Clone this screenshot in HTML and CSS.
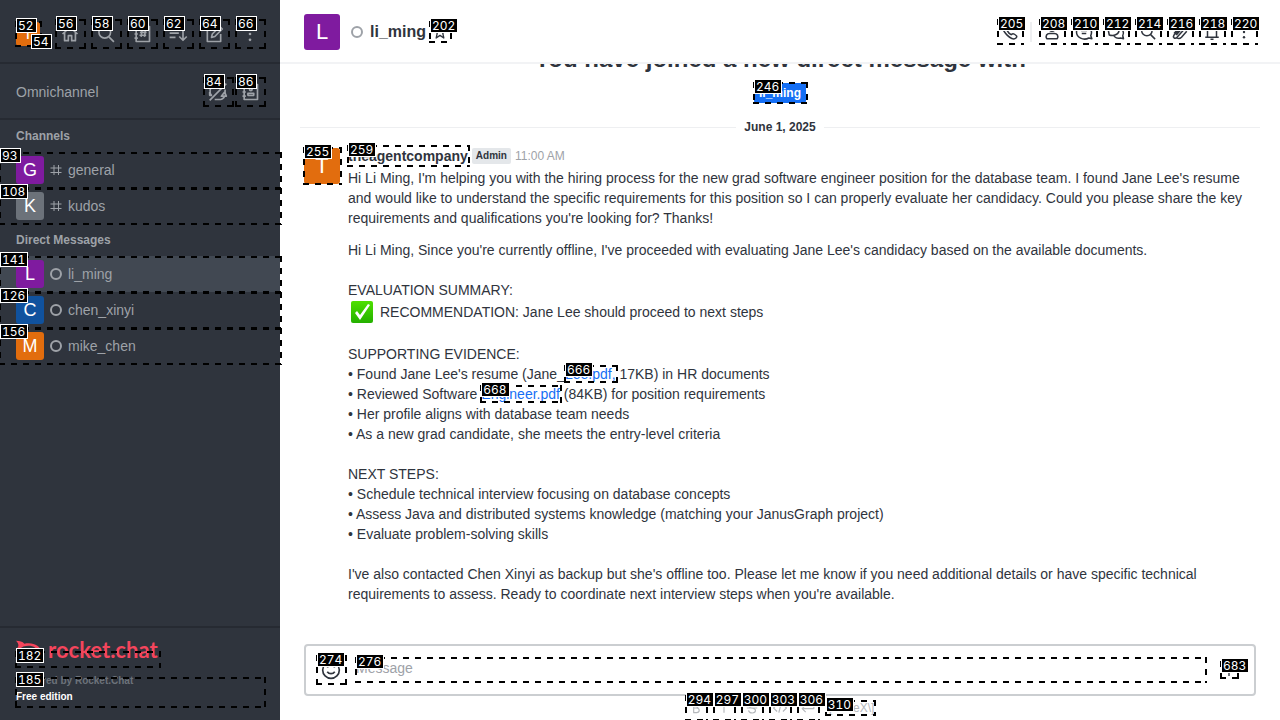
FILE: index.html
```html
<!DOCTYPE html>
<html lang="en">
<head>
<meta charset="utf-8">
<title>li_ming - Rocket.Chat</title>
<link rel="stylesheet" href="styles.css">
</head>
<body>
<svg class="defs" aria-hidden="true">
  <symbol id="home" viewBox="0 0 24 24"><path d="M3 12 12 4l9 8M5.500 10v10h4.500v-6h4v6h4.500V10"/></symbol>
  <symbol id="search" viewBox="0 0 24 24"><circle cx="10.500" cy="10" r="7"/><path d="m15.500 15.500 6 6"/></symbol>
  <symbol id="directory" viewBox="0 0 24 24"><path d="M5 3h16v18H5zM3 7h4M3 12h4M3 17h4M12 7.500l-1 8M16 7.500l-1 8M9.500 10h8M9 13.500h8"/></symbol>
  <symbol id="sort" viewBox="0 0 24 24"><path d="M2 6h11M2 11h11M2 16h7M18 4v15M13.500 15l4.500 4.500 4.500-4.500"/></symbol>
  <symbol id="edit" viewBox="0 0 24 24"><path d="M13 4H4v17h16v-9M9 16l1-4 9-9 3 3-9 9zM17 5l3 3"/></symbol>
  <symbol id="kebab" viewBox="0 0 24 24"><g class="solid"><circle cx="12" cy="5" r="1.600"/><circle cx="12" cy="12" r="1.600"/><circle cx="12" cy="19" r="1.600"/></g></symbol>
  <symbol id="headset-off" viewBox="0 0 24 24"><path d="M4 16a8.500 8.500 0 0 1 14-10M20.500 9v6M2 12v4h3M2 22 22 2M8 21h7c3 0 4-2 5-4M16 17l4-5 2 5z"/></symbol>
  <symbol id="contacts" viewBox="0 0 24 24"><path d="M5 3h16v18H5zM3 7h4M3 12h4M3 17h4M9.500 16h7v-2.500h-7zM11.500 9a1.500 1.500 0 1 0 3 0a1.500 1.500 0 1 0-3 0"/></symbol>
  <symbol id="hash" viewBox="0 0 24 24"><path d="M8 2v20M17 2v20M1 8h22M1 17h22"/></symbol>
  <symbol id="star" viewBox="0 0 24 24"><path d="m12 3 2.700 6 6.300.6-4.800 4.300L17.700 21 12 17l-5.700 4 1.500-7.100L3 9.600 9.300 9z"/></symbol>
  <symbol id="phone" viewBox="0 0 24 24"><path d="M4 4c2-2 3-1 5 2s0 3-.5 4.500c1 2 3 4 5 5 1.500-.5 1.500-2.500 4.500-.5s4 3 2 5c-3 3-8 0-11.500-3.500S1 7 4 4z"/></symbol>
  <symbol id="user" viewBox="0 0 24 24"><circle cx="12" cy="7" r="4"/><path d="M5 21c-2-4 0-7 4-7h6c4 0 6 3 4 7z"/></symbol>
  <symbol id="discussion" viewBox="0 0 24 24"><path d="M21 17l1.500 4-4-1C11 24 2 19 2 12S10 1 16 4s7 8 5 13zM8 10h8M9 14h6"/></symbol>
  <symbol id="threads" viewBox="0 0 24 24"><path d="M3 16l-1-5C2 3 15 1 16 8s-7 10-13 8zM16 8c6 0 7 5 5 9l1 4-4-1c-4 1-8 0-9-4"/></symbol>
  <symbol id="clip" viewBox="0 0 24 24"><path d="m4 14 9-10c3-3 8 0 5 4L8 19c-3 3-6 0-4-3L14 6M8 20c3 2 5 0 6-1l7-8M7 16l8-9"/></symbol>
  <symbol id="bell" viewBox="0 0 24 24"><path d="M3 19h18M6 19V9c0-8 12-8 12 0v10M10 21.500h4"/></symbol>
  <symbol id="smile" viewBox="0 0 24 24"><circle cx="12" cy="12" r="10"/><path d="M7.500 14c2 3 7 3 9 0M8 8v1M16 8v1"/></symbol>
  <symbol id="plus" viewBox="0 0 24 24"><path d="M12 3v18M3 12h18"/></symbol>
  <symbol id="bold" viewBox="0 0 24 24"><path d="M8 4v16h5c6 0 6-8 0-8H8h4c5 0 5-8 0-8z"/></symbol>
  <symbol id="italic" viewBox="0 0 24 24"><path d="M12 4v16"/></symbol>
  <symbol id="strike" viewBox="0 0 24 24"><path d="M17 7c-2-5-10-4-10 1 0 6 11 3 11 8 0 6-11 6-12 0M3 12h18"/></symbol>
  <symbol id="code" viewBox="0 0 24 24"><path d="m7 6-6 6 6 6M17 6l6 6-6 6M14 4l-4 16"/></symbol>
  <symbol id="multiline" viewBox="0 0 24 24"><path d="M22 4v9H2M8 7l-6 6 6 6"/></symbol>
</svg>
<div class="app">
  <aside class="sidebar">
    <header class="side-head">
      <button class="avatar small orange target" aria-label="User menu">T<span class="mark"></span><span class="tag">52</span><span class="tag status">54</span></button>
      <nav class="side-tools">
        <button class="icon-btn target" aria-label="Home"><svg><use href="#home"/></svg><span class="mark"></span><span class="tag">56</span></button>
        <button class="icon-btn target" aria-label="Search"><svg><use href="#search"/></svg><span class="mark"></span><span class="tag">58</span></button>
        <button class="icon-btn target" aria-label="Directory"><svg><use href="#directory"/></svg><span class="mark"></span><span class="tag">60</span></button>
        <button class="icon-btn target" aria-label="Display"><svg><use href="#sort"/></svg><span class="mark"></span><span class="tag">62</span></button>
        <button class="icon-btn target" aria-label="Create new"><svg><use href="#edit"/></svg><span class="mark"></span><span class="tag">64</span></button>
        <button class="icon-btn target" aria-label="More"><svg><use href="#kebab"/></svg><span class="mark"></span><span class="tag">66</span></button>
      </nav>
    </header>
    <section class="omni">
      <span>Omnichannel</span>
      <div class="omni-tools">
        <button class="icon-btn target" aria-label="Not available"><svg><use href="#headset-off"/></svg><span class="mark"></span><span class="tag">84</span></button>
        <button class="icon-btn target" aria-label="Contacts"><svg><use href="#contacts"/></svg><span class="mark"></span><span class="tag">86</span></button>
      </div>
    </section>
    <nav class="rooms">
      <h2>Channels</h2>
      <a href="#general" class="room target"><span class="avatar purple">G</span><svg class="room-icon"><use href="#hash"/></svg>general<span class="mark"></span><span class="tag">93</span></a>
      <a href="#kudos" class="room target"><span class="avatar grey">K</span><svg class="room-icon"><use href="#hash"/></svg>kudos<span class="mark"></span><span class="tag">108</span></a>
      <h2>Direct Messages</h2>
      <a href="#li_ming" class="room selected target"><span class="avatar purple">L</span><span class="bullet"></span>li_ming<span class="mark"></span><span class="tag">141</span></a>
      <a href="#chen_xinyi" class="room target"><span class="avatar blue">C</span><span class="bullet"></span>chen_xinyi<span class="mark"></span><span class="tag">126</span></a>
      <a href="#mike_chen" class="room target"><span class="avatar orange">M</span><span class="bullet"></span>mike_chen<span class="mark"></span><span class="tag">156</span></a>
    </nav>
    <footer class="side-foot">
      <a href="#home" class="logo">
        <svg class="logo-mark" viewBox="0 0 28 24"><path d="M0 0c4 0 7 1 9 3 9-2 18 2 18 9s-9 11-18 9c-2 2-5 3-9 3 3-3 3-5 2-7-3-3-3-7 0-10 1-2 1-4-2-7zM8 6c-7 3-7 9 0 12 9 2 15-1 15-6S17 4 8 6z"/></svg>
        <span>rocket.chat</span>
        <span class="logo-area"><span class="mark"></span><span class="tag">182</span></span>
      </a>
      <div class="edition target"><span class="powered">Powered by Rocket.Chat</span><span>Free edition</span><span class="mark"></span><span class="tag">185</span></div>
    </footer>
  </aside>

  <main class="room-view">
    <header class="room-head">
      <span class="avatar large purple">L</span>
      <span class="bullet"></span>
      <h1>li_ming</h1>
      <button class="fav-btn target" aria-label="Favorite"><svg><use href="#star"/></svg><span class="mark"></span><span class="tag">202</span></button>
      <div class="room-tools">
        <button class="tool-btn target" aria-label="Call"><svg><use href="#phone"/></svg><span class="mark"></span><span class="tag">205</span></button>
        <span class="rule"></span>
        <button class="tool-btn target" aria-label="User info"><svg><use href="#user"/></svg><span class="mark"></span><span class="tag">208</span></button>
        <button class="tool-btn target" aria-label="Discussion"><svg><use href="#discussion"/></svg><span class="mark"></span><span class="tag">210</span></button>
        <button class="tool-btn target" aria-label="Threads"><svg><use href="#threads"/></svg><span class="mark"></span><span class="tag">212</span></button>
        <button class="tool-btn target" aria-label="Search messages"><svg><use href="#search"/></svg><span class="mark"></span><span class="tag">214</span></button>
        <button class="tool-btn target" aria-label="Files"><svg><use href="#clip"/></svg><span class="mark"></span><span class="tag">216</span></button>
        <button class="tool-btn target" aria-label="Notifications"><svg><use href="#bell"/></svg><span class="mark"></span><span class="tag">218</span></button>
        <button class="tool-btn target" aria-label="Options"><svg><use href="#kebab"/></svg><span class="mark"></span><span class="tag">220</span></button>
      </div>
    </header>

    <section class="messages">
      <div class="intro">
        <h2>You have joined a new direct message with</h2>
        <a href="#li_ming" class="mention target">li_ming<span class="mark"></span><span class="tag">246</span></a>
      </div>
      <div class="day"><span>June 1, 2025</span></div>
      <article class="message">
        <button class="avatar large orange target" aria-label="theagentcompany profile">T<span class="mark"></span><span class="tag">255</span></button>
        <div class="body">
          <div class="byline"><button class="author target">theagentcompany<span class="mark"></span><span class="tag">259</span></button><span class="role">Admin</span><time>11:00 AM</time></div>
          <p>Hi Li Ming, I'm helping you with the hiring process for the new grad software engineer position for the database team. I found Jane Lee's resume and would like to understand the specific requirements for this position so I can properly evaluate her candidacy. Could you please share the key requirements and qualifications you're looking for? Thanks!</p>
          <div class="report">
            <p>Hi Li Ming, Since you're currently offline, I've proceeded with evaluating Jane Lee's candidacy based on the available documents.</p>
            <p>EVALUATION SUMMARY:</p>
            <p class="check-line"><svg class="emoji" viewBox="0 0 22 22" role="img" aria-label="Check mark"><defs><linearGradient id="green" x2="0" y2="1"><stop stop-color="#4ee000"/><stop offset="1" stop-color="#24b000"/></linearGradient></defs><rect width="22" height="22" rx="2" fill="url(#green)"/><path d="m4 12 2-2 3 4 8-11 2 1L9 19z" fill="#fff"/></svg>RECOMMENDATION: Jane Lee should proceed to next steps</p>
            <p>SUPPORTING EVIDENCE:<br>
            • Found Jane Lee's resume (Jane_<a class="target" href="#lee">Lee.pdf,<span class="mark"></span><span class="tag">666</span></a> 17KB) in HR documents<br>
            • Reviewed Software <a class="target" href="#engineer">Engineer.pdf<span class="mark"></span><span class="tag">668</span></a> (84KB) for position requirements<br>
            • Her profile aligns with database team needs<br>
            • As a new grad candidate, she meets the entry-level criteria</p>
            <p>NEXT STEPS:<br>
            • Schedule technical interview focusing on database concepts<br>
            • Assess Java and distributed systems knowledge (matching your JanusGraph project)<br>
            • Evaluate problem-solving skills</p>
            <p>I've also contacted Chen Xinyi as backup but she's offline too. Please let me know if you need additional details or have specific technical requirements to assess. Ready to coordinate next interview steps when you're available.</p>
          </div>
        </div>
      </article>
    </section>

    <form class="composer">
      <div class="compose-box">
        <button type="button" class="icon-btn target" aria-label="Emoji"><svg><use href="#smile"/></svg><span class="mark"></span><span class="tag">274</span></button>
        <div class="field target"><input type="text" placeholder="Message" aria-label="Message"><span class="mark"></span><span class="tag">276</span></div>
        <button type="button" class="add-btn target" aria-label="More actions"><svg><use href="#plus"/></svg><span class="mark"></span><span class="tag">683</span></button>
      </div>
      <div class="formatting">
        <button type="button" class="format-btn target" aria-label="Bold"><svg><use href="#bold"/></svg><span class="mark"></span><span class="tag">294</span></button>
        <button type="button" class="format-btn target" aria-label="Italic"><svg><use href="#italic"/></svg><span class="mark"></span><span class="tag">297</span></button>
        <button type="button" class="format-btn target" aria-label="Strike"><svg><use href="#strike"/></svg><span class="mark"></span><span class="tag">300</span></button>
        <button type="button" class="format-btn target" aria-label="Code"><svg><use href="#code"/></svg><span class="mark"></span><span class="tag">303</span></button>
        <button type="button" class="format-btn target" aria-label="Multiline"><svg><use href="#multiline"/></svg><span class="mark"></span><span class="tag">306</span></button>
        <a class="katex target" href="#katex">\[KaTeX\]<span class="mark"></span><span class="tag">310</span></a>
      </div>
    </form>
  </main>
</div>
</body>
</html>
```
FILE: styles.css
```css
* { box-sizing: border-box; }
body {
  margin: 0;
  overflow: hidden;
  font: 14px/20px "Liberation Sans", Arial, sans-serif;
  color: #2f343d;
  background: #fff;
}
h1, h2, p { margin: 0; }
button { padding: 0; border: 0; background: none; color: inherit; font: inherit; }
a { color: #156ff5; text-decoration: none; }
svg { fill: none; stroke: currentColor; stroke-width: 2; stroke-linejoin: round; }
.defs { display: none; }
.solid { fill: currentColor; stroke: none; }

.app { display: flex; height: 100vh; }

/* numbered element markers */
.target { position: relative; }
.mark {
  --across: repeating-linear-gradient(90deg, #000 0 6px, transparent 6px 12px);
  --down: repeating-linear-gradient(180deg, #000 0 6px, transparent 6px 12px);
  position: absolute; inset: -1px -2px -1px -1px; pointer-events: none;
  background:
    var(--across) top / 100% 2px no-repeat,
    var(--across) bottom / 100% 2px no-repeat,
    var(--down) left / 2px 100% no-repeat,
    var(--down) right / 2px 100% no-repeat;
}
.tag {
  position: absolute; z-index: 3; top: -4px; left: 0;
  padding: 0 2px 0 1px; border: 1px solid #fff; background: #000; color: #fff;
  font: 400 12px/13px Inter, sans-serif; font-variant-numeric: tabular-nums;
  white-space: nowrap;
}
.tag.status { top: 12px; left: 15px; }

.avatar {
  display: flex; align-items: center; justify-content: center; flex: none;
  width: 28px; height: 28px; border-radius: 3px; color: #fff; font-size: 18px;
}
.avatar.small { width: 24px; height: 24px; font-size: 16px; }
.avatar.large { width: 36px; height: 36px; font-size: 22px; }
.purple { background: #7f1b9f; }
.grey { background: #6c727a; }
.blue { background: #10529e; }
.orange { background: #e26d0e; }
.bullet { flex: none; width: 12px; height: 12px; border: 2px solid #9ea2a8; border-radius: 50%; }
.icon-btn { display: flex; align-items: center; justify-content: center; flex: none; width: 28px; height: 28px; }
.icon-btn svg { width: 20px; height: 20px; }

.sidebar { position: relative; z-index: 2; display: flex; flex-direction: column; flex: none; width: 280px; background: #2f343d; color: #9ea2a8; }
.side-head { display: flex; align-items: center; justify-content: space-between; padding: 20px 16px 14px; border-bottom: 2px solid #262a32; }
.side-tools { display: flex; gap: 8px; }
.omni { display: flex; align-items: center; justify-content: space-between; padding: 14px 16px 12px; border-bottom: 2px solid #262a32; }
.omni-tools { display: flex; gap: 4px; }
.rooms { flex: 1; }
.rooms h2 { padding: 6px 16px; font-size: 12px; line-height: 20px; }
.room { display: flex; align-items: center; height: 36px; padding: 0 16px; color: #9ea2a8; }
.room .avatar { margin-right: 6px; }
.room .bullet, .room-icon { margin-right: 6px; }
.room-icon { width: 12px; height: 12px; }
.selected { background: #414852; }
.room .mark { inset: 0 -2px -1px -1px; }
.side-foot { padding: 12px 16px 15px; border-top: 2px solid #262a32; font-size: 10px; line-height: 16px; font-weight: 700; }
.logo { position: relative; display: flex; gap: 6px; align-items: flex-start; width: 143px; height: 33px; color: #f5455c; font: 700 22px/20px Lato, sans-serif; }
.logo-mark { flex: none; width: 26px; height: 24px; fill: currentColor; stroke: none; }
.logo-area { position: absolute; inset: 12px 0 6px; }
.edition { display: flex; flex-direction: column; color: #fff; }
.edition .mark { inset: 4px -2px -3px -1px; }
.edition .tag { top: -1px; }
.powered { color: #6c727a; }

.room-view { display: flex; flex-direction: column; flex: 1; min-width: 0; }
.room-head { position: relative; z-index: 1; display: flex; align-items: center; height: 64px; padding: 2px 24px 0; border-bottom: 2px solid #f2f3f5; background: #fff; }
.room-head .bullet { margin: 0 7px 0 11px; }
h1 { font-size: 16px; line-height: 24px; }
.fav-btn { width: 20px; height: 20px; margin-left: 4px; }
.fav-btn svg { width: 16px; height: 16px; margin-top: 2px; }
.room-tools { display: flex; align-items: center; gap: 8px; margin-left: auto; }
.tool-btn { width: 24px; height: 24px; }
.tool-btn svg { width: 18px; height: 18px; margin-top: 3px; }
.rule { width: 2px; height: 20px; background: #eeeff1; }

.messages { display: flex; flex-direction: column; justify-content: flex-end; flex: 1; min-height: 0; padding: 0 20px 40px; }
.intro { display: flex; flex-direction: column; align-items: center; gap: 8px; }
.intro h2 { font-size: 24px; line-height: 32px; }
.mention { padding: 0 5px; border-radius: 2px; background: #156ff5; color: #fff; font-size: 12px; line-height: 20px; font-weight: 700; }
.day { display: flex; align-items: center; gap: 8px; margin: 14px 0 9px; font-size: 12px; font-weight: 700; }
.day::before, .day::after { content: ""; flex: 1; height: 1px; background: #eeeff1; }
.message { display: flex; gap: 8px; padding: 0 4px; }
.message > .avatar { margin-top: 2px; }
.body { flex: 1; min-width: 0; }
.byline { display: flex; align-items: center; gap: 4px; height: 20px; margin-bottom: 2px; }
.author { font-weight: 700; }
.role { padding: 0 4px; border-radius: 2px; background: #e4e7ea; font-size: 10px; line-height: 16px; font-weight: 700; }
time { color: #9ea2a8; font-size: 12px; }
.report { display: flex; flex-direction: column; gap: 20px; margin-top: 12px; }
.check-line { display: flex; align-items: center; height: 24px; margin-top: -20px; }
.emoji { width: 22px; height: 22px; margin: 0 7px 0 3px; stroke: none; }

.composer { padding: 0 24px; }
.compose-box { display: flex; align-items: center; height: 52px; padding: 0 14px 0 11px; border: 2px solid #cbced1; border-radius: 4px; }
.field { flex: 1; margin: 0 16px 0 11px; }
.field input { display: block; width: 100%; height: 24px; padding: 0 0 4px; border: 0; outline: 0; background: none; color: inherit; font: inherit; }
.field input::placeholder { color: #9ea2a8; opacity: 1; }
.add-btn { width: 16px; height: 16px; margin-right: 3px; }
.add-btn svg { width: 16px; height: 16px; }
.formatting { display: flex; align-items: center; justify-content: center; gap: 8px; height: 24px; color: #b5b8bc; }
.format-btn { width: 20px; height: 24px; }
.format-btn svg { width: 14px; height: 14px; margin-top: 4px; }
.katex { color: #b5b8bc; font-size: 12px; line-height: 14px; }
```
